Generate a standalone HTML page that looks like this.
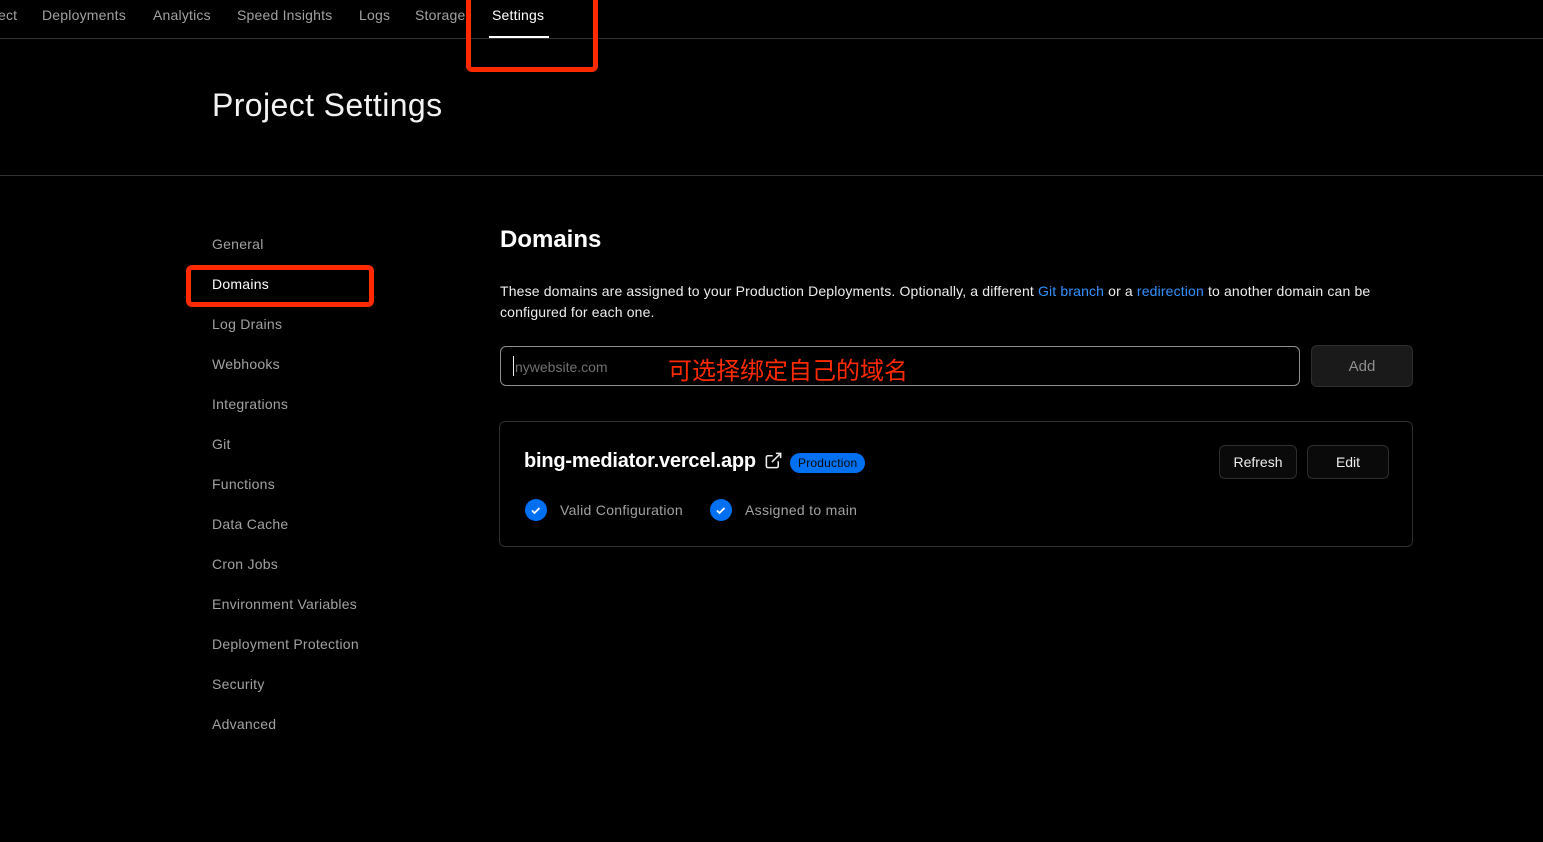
<!DOCTYPE html>
<html><head><meta charset="utf-8"><style>
*{margin:0;padding:0;box-sizing:border-box}
body{width:1543px;height:842px;background:#000;color:#ededed;font-family:"Liberation Sans","Noto Sans CJK SC",sans-serif;position:relative;overflow:hidden}
.a{position:absolute;white-space:nowrap}
.nav{font-size:14px;color:#a1a1a1;top:7px;letter-spacing:0.2px}
.side{font-size:14px;color:#a1a1a1;left:212px;letter-spacing:0.25px}
.btn{position:absolute;background:#0a0a0a;border:1px solid #2e2e2e;border-radius:6px;color:#ededed;font-size:14px;display:flex;align-items:center;justify-content:center}
.chk{position:absolute;width:22px;height:22px;border-radius:50%;background:#0070f3}
</style></head><body>
<div class="a nav" style="left:-2px">ect</div>
<div class="a nav" style="left:42px">Deployments</div>
<div class="a nav" style="left:153px">Analytics</div>
<div class="a nav" style="left:237px">Speed Insights</div>
<div class="a nav" style="left:359px">Logs</div>
<div class="a nav" style="left:415px">Storage</div>
<div class="a nav" style="left:492px;color:#fff">Settings</div>
<div class="a" style="left:489px;top:36px;width:60px;height:2px;background:#fff"></div>
<div class="a" style="left:0;top:38px;width:1543px;height:1px;background:#333"></div>
<div class="a" style="left:466px;top:0;width:132px;height:72px;border:5px solid #ff2a00;border-top:none;border-radius:0 0 6px 6px"></div>
<div class="a" style="left:212px;top:87px;font-size:32px;letter-spacing:0.4px;color:#f2f2f2">Project Settings</div>
<div class="a" style="left:0;top:175px;width:1543px;height:1px;background:#333"></div>
<div class="a side" style="top:236px">General</div>
<div class="a side" style="top:276px;color:#fff">Domains</div>
<div class="a" style="left:186px;top:265px;width:188px;height:42px;border:5px solid #ff2a00;border-radius:6px"></div>
<div class="a side" style="top:316px">Log Drains</div>
<div class="a side" style="top:356px">Webhooks</div>
<div class="a side" style="top:396px">Integrations</div>
<div class="a side" style="top:436px">Git</div>
<div class="a side" style="top:476px">Functions</div>
<div class="a side" style="top:516px">Data Cache</div>
<div class="a side" style="top:556px">Cron Jobs</div>
<div class="a side" style="top:596px">Environment Variables</div>
<div class="a side" style="top:636px">Deployment Protection</div>
<div class="a side" style="top:676px">Security</div>
<div class="a side" style="top:716px">Advanced</div>
<div class="a" style="left:500px;top:226px;font-size:24px;font-weight:bold;color:#fff">Domains</div>
<div class="a" style="left:500px;top:281px;font-size:14px;line-height:21px;letter-spacing:0.15px;color:#ededed;white-space:normal;width:915px">These domains are assigned to your Production Deployments. Optionally, a different <span style="color:#3291ff">Git branch</span> or a <span style="color:#3291ff">redirection</span> to another domain can be configured for each one.</div>
<div class="a" style="left:500px;top:346px;width:800px;height:40px;border:1px solid #8f8f8f;border-radius:6px"></div>
<div class="a" style="left:513px;top:356px;width:1px;height:20px;background:#ededed"></div>
<div class="a" style="left:515px;top:359px;font-size:14px;color:#707070">nywebsite.com</div>
<div class="a" style="left:668px;top:351px;font-size:24px;color:#ff2a00">可选择绑定自己的域名</div>
<div class="btn" style="left:1311px;top:345px;width:102px;height:42px;background:#1a1a1a;color:#8f8f8f;font-size:15px">Add</div>
<div class="a" style="left:499px;top:421px;width:914px;height:126px;border:1px solid #2e2e2e;border-radius:6px"></div>
<div class="a" style="left:524px;top:450px;font-size:20px;font-weight:bold;letter-spacing:-0.2px;color:#fff">bing-mediator.vercel.app</div>
<svg class="a" style="left:764px;top:451px" width="19" height="19" viewBox="0 0 24 24" fill="none" stroke="#ededed" stroke-width="2"><path d="M18 13v6a2 2 0 0 1-2 2H5a2 2 0 0 1-2-2V8a2 2 0 0 1 2-2h6M15 3h6v6M10 14L21 3"/></svg>
<div class="a" style="left:790px;top:453px;height:20px;padding:0 8px;background:#0070f3;border-radius:10px;color:#0a0a0a;font-size:12px;line-height:20px;letter-spacing:0.2px">Production</div>
<div class="btn" style="left:1219px;top:445px;width:78px;height:34px">Refresh</div>
<div class="btn" style="left:1307px;top:445px;width:82px;height:34px">Edit</div>
<div class="chk" style="left:525px;top:499px"><svg width="22" height="22" viewBox="0 0 22 22"><path d="M7 11.5l2.5 2.5 5-5" fill="none" stroke="#fff" stroke-width="1.8"/></svg></div>
<div class="a" style="left:560px;top:502px;font-size:14px;letter-spacing:0.3px;color:#a1a1a1">Valid Configuration</div>
<div class="chk" style="left:710px;top:499px"><svg width="22" height="22" viewBox="0 0 22 22"><path d="M7 11.5l2.5 2.5 5-5" fill="none" stroke="#fff" stroke-width="1.8"/></svg></div>
<div class="a" style="left:745px;top:502px;font-size:14px;letter-spacing:0.3px;color:#a1a1a1">Assigned to main</div>
</body></html>
